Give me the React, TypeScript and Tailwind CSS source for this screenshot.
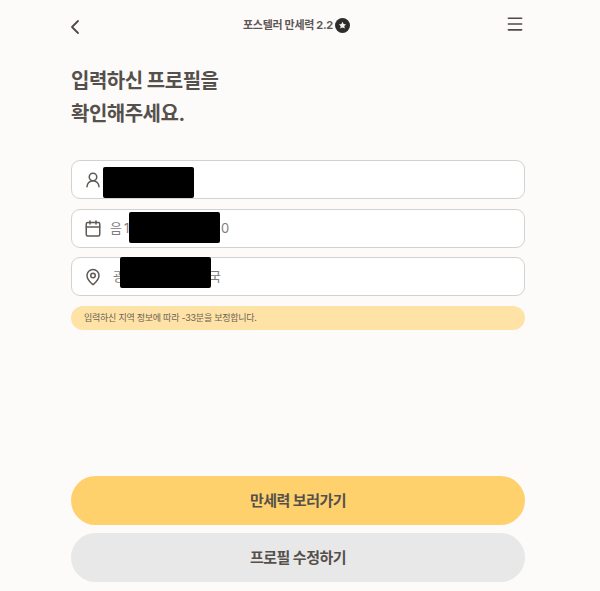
import { Calendar, ChevronLeft, MapPin, Menu, UserRound } from 'lucide-react';
import type { ReactNode } from 'react';

const KR_FONT = "font-['Inter','Noto_Sans_CJK_KR',sans-serif]";

function FieldRow({ icon, children, gap }: { icon: ReactNode; children: ReactNode; gap: string }) {
  return (
    <div className={`relative flex h-[39px] items-center rounded-[9px] border border-[#d4d2d0] bg-white pl-[12px] text-[13px] text-[#7f7d7c] ${gap}`}>
      <span className="flex w-[18px] justify-center text-[#5f5954]">{icon}</span>
      {children}
    </div>
  );
}

function Redacted({ className }: { className: string }) {
  return <div className={`absolute h-[31px] w-[91px] rounded-[2px] bg-black ${className}`} />;
}

export default function App() {
  return (
    <div className={`flex h-[591px] w-[600px] flex-col overflow-hidden bg-[#fdfbfa] pl-[71px] pr-[75px] ${KR_FONT}`}>
      {/* Top bar */}
      <header className="relative flex h-[50px] items-center justify-between text-[#4f4a46]">
        <ChevronLeft size={24} strokeWidth={1.8} className="-ml-[8px] mt-[3px]" />
        <div className="absolute left-[172px] top-[16px] flex items-center gap-[2px]">
          <span className="text-[11px] font-bold leading-[18px] tracking-[-0.3px] text-[#5c5753]">포스텔러 만세력 2.2</span>
          <svg width="15" height="15" viewBox="0 0 15 15">
            <circle cx="7.5" cy="7.5" r="7.5" fill="#2e2c2b" />
            <path d="M7.5 3.8l1.1 2.3 2.5.3-1.8 1.7.5 2.5-2.3-1.2-2.3 1.2.5-2.5-1.8-1.7 2.5-.3z" fill="#f4f2f0" />
          </svg>
        </div>
        <Menu size={20} strokeWidth={1.9} className="-mt-[2px]" />
      </header>

      <h1 className="mt-[15px] text-[20px] font-bold leading-[33px] tracking-[-0.5px] text-[#55504c]">
        입력하신 프로필을
        <br />
        확인해주세요.
      </h1>

      {/* Profile fields */}
      <div className="mt-[29px] flex flex-col">
        <FieldRow gap="gap-2" icon={<UserRound size={22} strokeWidth={2} />}>
          <Redacted className="left-[31px] top-[6px]" />
        </FieldRow>
        <div className="mt-[10px]">
          <FieldRow gap="gap-[8px]" icon={<Calendar size={19} strokeWidth={2} />}>
            <span className="tracking-[-0.8px]">음 1</span>
            <span className="absolute left-[149px]">0</span>
            <Redacted className="left-[57px] top-[2px]" />
          </FieldRow>
        </div>
        <div className="mt-[9px]">
          <FieldRow gap="gap-[11px]" icon={<MapPin size={20} strokeWidth={2} />}>
            <span>광</span>
            <span className="absolute left-[137px]">국</span>
            <Redacted className="left-[48px] -top-[1px]" />
          </FieldRow>
        </div>
      </div>

      <p className="mt-[10px] flex h-[24px] items-center rounded-full bg-[#ffe3a6] pl-[13px] text-[9px] tracking-[-0.25px] text-[#6b6257]">
        입력하신 지역 정보에 따라 -33분을 보정합니다.
      </p>

      {/* Bottom actions */}
      <div className="mt-auto flex flex-col gap-[8px] pb-[9px]">
        <button className="h-[49px] rounded-full bg-[#ffd16d] pt-[2px] text-[15px] font-bold tracking-[-0.5px] text-[#55504c]">
          만세력 보러가기
        </button>
        <button className="h-[49px] rounded-full bg-[#e8e8e8] pt-[2px] text-[15px] font-bold tracking-[-0.5px] text-[#55504c]">
          프로필 수정하기
        </button>
      </div>
    </div>
  );
}
